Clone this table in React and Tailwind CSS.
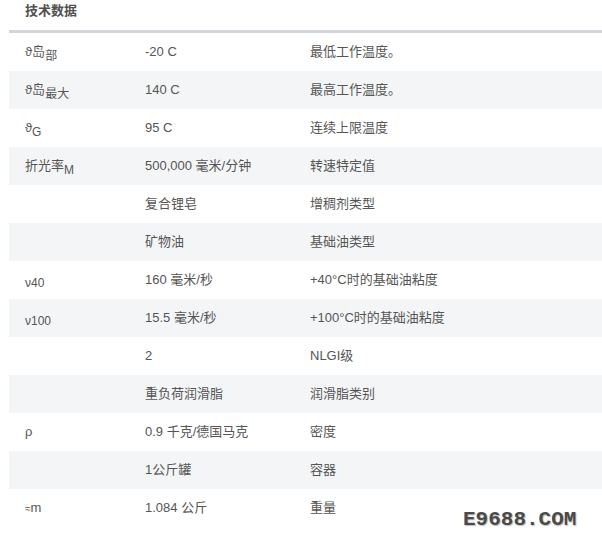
import React from "react";

const Sub = ({ children }) => (
  <span className="relative top-[4px] text-[12px]">{children}</span>
);

const rows = [
  [<>ϑ岛<Sub>部</Sub></>, "-20 C", "最低工作温度。"],
  [<>ϑ岛<Sub>最大</Sub></>, "140 C", "最高工作温度。"],
  [<>ϑ<Sub>G</Sub></>, "95 C", "连续上限温度"],
  [<>折光率<Sub>M</Sub></>, "500,000 毫米/分钟", "转速特定值"],
  ["", "复合锂皂", "增稠剂类型"],
  ["", "矿物油", "基础油类型"],
  [<span className="relative top-[3px] text-[12px]">ν40</span>, "160 毫米/秒", "+40°C时的基础油粘度"],
  [<span className="relative top-[3px] text-[12px]">ν100</span>, "15.5 毫米/秒", "+100°C时的基础油粘度"],
  ["", "2", "NLGI级"],
  ["", "重负荷润滑脂", "润滑脂类别"],
  ["ρ", "0.9 千克/德国马克", "密度"],
  ["", "1公斤罐", "容器"],
  [<><span className="text-[10px]">≈</span>m</>, "1.084 公斤", "重量"],
];

export default function App() {
  return (
    <div
      className="relative w-[602px] h-[540px] bg-white text-[13px] text-[#555555]"
      style={{ fontFamily: '"Liberation Sans", "Noto Sans CJK SC", sans-serif' }}
    >
      <div className="ml-[9px]">
        <div className="h-[30px] pl-4 pt-[1px] leading-[20px] font-bold text-[#505050]">
          技术数据
        </div>
        <div className="h-[3px] bg-[#d2d5da]" />
        {rows.map((r, i) => (
          <div
            key={i}
            className={`flex items-center h-[38px] pl-4 ${i % 2 === 1 ? "bg-[#f4f5f7]" : "bg-white"}`}
          >
            <div className="w-[120px]">{r[0]}</div>
            <div className="w-[165px]">{r[1]}</div>
            <div className="flex-1">{r[2]}</div>
          </div>
        ))}
      </div>
      <div
        className="absolute left-[463px] top-[509px] text-[21px] font-bold leading-[22px] text-[#4a4a4a] tracking-[0px]"
        style={{ fontFamily: '"Liberation Mono", monospace', textShadow: "1px 1px 1px #bbb" }}
      >
        E9688.COM
      </div>
    </div>
  );
}
